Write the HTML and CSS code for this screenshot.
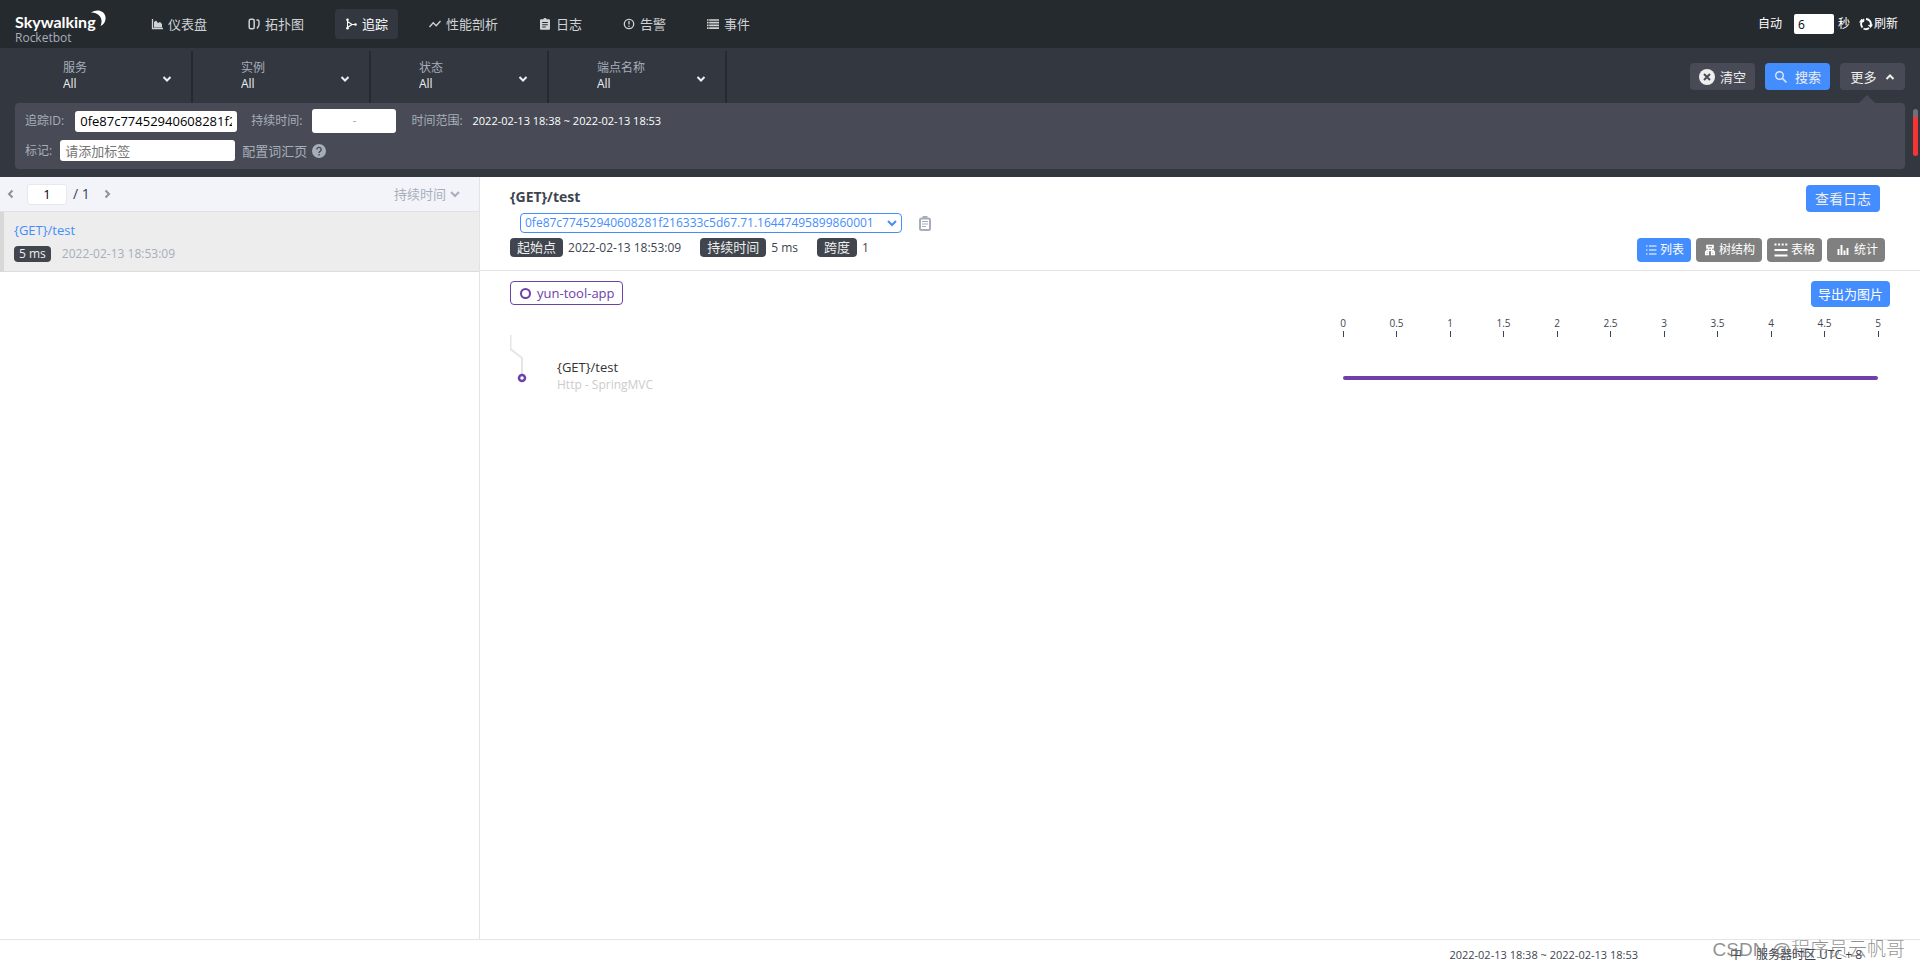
FILE: index.html
```html
<!DOCTYPE html>
<html lang="zh-CN">
<head>
<meta charset="utf-8">
<title>Skywalking Rocketbot</title>
<link rel="stylesheet" href="styles.css">
</head>
<body>
<header class="header">
  <div class="logo">
    <div class="logo-name">Skywalking<svg class="logo-moon" viewBox="0 0 16 17"><path d="M1 2.500C7-1.500 14.500.5 15.500 7c.5 4-1.500 7.500-5 9 1.500-3 1.500-6.500-.5-9.500C8 3.800 5 2.500 1 2.500z" fill="#fff"/></svg></div>
    <div class="logo-sub">Rocketbot</div>
  </div>
  <nav class="nav">
    <a class="nav-item" href="#"><svg class="icon" viewBox="0 0 12 12"><path d="M1.500 1v9.500H12" fill="none" stroke="currentColor" stroke-width="1.300"/><path d="M3 9.500V4l2-1.500L7 5l2-1 2 2v3.500z" fill="currentColor"/></svg>仪表盘</a>
    <a class="nav-item" href="#"><svg class="icon" viewBox="0 0 12 12"><rect x="1.200" y="1.200" width="5" height="9.600" rx="1.500" fill="none" stroke="currentColor" stroke-width="1.500"/><path d="M8.500 2h1q1.500 0 1.500 1.500v3q0 1.500-2 4" fill="none" stroke="currentColor" stroke-width="1.400"/></svg>拓扑图</a>
    <a class="nav-item active" href="#"><svg class="icon" viewBox="0 0 12 12"><path d="M2.500 2v8M2.500 3.500 7 6.500h3M2.500 9.500 7 6.500" fill="none" stroke="currentColor" stroke-width="1.100"/><circle cx="2.500" cy="1.700" r="1.300" fill="currentColor"/><circle cx="2.500" cy="10.300" r="1.300" fill="currentColor"/><circle cx="10.500" cy="6.500" r="1.300" fill="currentColor"/></svg>追踪</a>
    <a class="nav-item" href="#"><svg class="icon" viewBox="0 0 12 12"><path d="m.5 9 3.700-4.200 3 3L11.500 3" fill="none" stroke="currentColor" stroke-width="1.300"/></svg>性能剖析</a>
    <a class="nav-item" href="#"><svg class="icon" viewBox="0 0 12 12"><path fill-rule="evenodd" d="M1 2.200q0-1 1-1h2.300a1.800 1.800 0 0 1 3.400 0H10q1 0 1 1v8.600q0 1-1 1H2q-1 0-1-1zM3.200 4v1h5.600V4zm0 2.200v1h5.600v-1zm0 2.200v1h3.600v-1z" fill="currentColor"/></svg>日志</a>
    <a class="nav-item" href="#"><svg class="icon" viewBox="0 0 12 12"><circle cx="6" cy="6" r="4.700" fill="none" stroke="currentColor" stroke-width="1.300"/><path d="M6 3v3.600M6 7.700V9" stroke="currentColor" stroke-width="1.300"/></svg>告警</a>
    <a class="nav-item" href="#"><svg class="icon" viewBox="0 0 12 12"><path d="M0 2h1.600M2.200 2H12M0 4.700h1.600M2.200 4.700H12M0 7.400h1.600M2.200 7.400H12M0 10.100h1.600M2.200 10.100H12" stroke="currentColor" stroke-width="1.700"/></svg>事件</a>
  </nav>
  <div class="reload">
    <label for="auto">自动</label>
    <input id="auto" class="reload-input" type="text" value="6">
    <span class="reload-unit">秒</span>
    <button class="reload-btn" type="button"><svg class="icon-14" viewBox="0 0 14 14"><path d="M3.500 10.500A5 5 0 0 1 5.300 2.400M7 2a5 5 0 0 1 4.800 6M10 11a5 5 0 0 1-5.500.5" fill="none" stroke="#fff" stroke-width="1.900"/><path d="M0 5.500 2.500 1.800 5.500 5zM14 7.500 11.700 11 8.800 8z" fill="#fff"/></svg>刷新</button>
  </div>
</header>

<section class="tools">
  <div class="filters">
    <div class="filter"><label for="f1">服务</label><select id="f1"><option>All</option></select><svg class="chev" viewBox="0 0 10 10"><path d="m1.500 3 3.500 3.500L8.500 3" /></svg></div>
    <div class="filter"><label for="f2">实例</label><select id="f2"><option>All</option></select><svg class="chev" viewBox="0 0 10 10"><path d="m1.500 3 3.500 3.500L8.500 3" /></svg></div>
    <div class="filter"><label for="f3">状态</label><select id="f3"><option>All</option></select><svg class="chev" viewBox="0 0 10 10"><path d="m1.500 3 3.500 3.500L8.500 3" /></svg></div>
    <div class="filter"><label for="f4">端点名称</label><select id="f4"><option>All</option></select><svg class="chev" viewBox="0 0 10 10"><path d="m1.500 3 3.500 3.500L8.500 3" /></svg></div>
    <div class="actions">
      <button class="action" type="button"><svg class="icon-16" viewBox="0 0 16 16"><circle cx="8" cy="8" r="8" fill="#eee"/><path d="m5 5 6 6m0-6-6 6" stroke="#484b55" stroke-width="2"/></svg>清空</button>
      <button class="action primary" type="button"><svg class="icon-14" viewBox="0 0 14 14"><circle cx="5.500" cy="5.500" r="3.800" fill="none" stroke="#dfe9fb" stroke-width="1.400"/><path d="m8.300 8.300 4.200 4.200" stroke="#dfe9fb" stroke-width="1.600"/></svg>搜索</button>
      <button class="action more" type="button">更多<svg class="chev-up" viewBox="0 0 10 10"><path d="m1.500 7 3.500-3.500L8.500 7" /></svg></button>
    </div>
  </div>
  <div class="panel">
    <div class="panel-row">
      <label for="tid">追踪ID:</label>
      <input id="tid" class="field trace" type="text" value="0fe87c77452940608281f216333c5d67.71.16447495899860001">
      <label for="dmin">持续时间:</label>
      <span class="range"><input id="dmin" type="text"><span>-</span><input type="text" aria-label="最大持续时间"></span>
      <span class="muted">时间范围:</span>
      <span class="period">2022-02-13 18:38 ~ 2022-02-13 18:53</span>
    </div>
    <div class="panel-row">
      <label for="tag">标记:</label>
      <input id="tag" class="field tag-field" type="text" placeholder="请添加标签">
      <a class="vocab" href="#">配置词汇页<svg class="icon-14" viewBox="0 0 14 14"><circle cx="7" cy="7" r="7" fill="#a7aebb"/><path d="M4.800 5.500a2.200 2.100 0 1 1 3.300 1.800Q7 7.900 7 8.900M7 10v1.500" fill="none" stroke="#484b55" stroke-width="1.400"/></svg></a>
    </div>
  </div>
  <div class="scroll-mark"></div>
</section>

<main class="main">
  <aside class="list">
    <div class="pager">
      <button type="button" class="page-btn" aria-label="上一页"><svg class="arrow" viewBox="0 0 10 10"><path d="M6.500 1.500 3 5l3.500 3.500"/></svg></button>
      <input class="page-input" type="text" value="1" aria-label="页码">
      <span class="page-total">/ 1</span>
      <button type="button" class="page-btn" aria-label="下一页"><svg class="arrow" viewBox="0 0 10 10"><path d="M3.500 1.500 7 5 3.500 8.500"/></svg></button>
      <button type="button" class="sort">持续时间<svg class="arrow" viewBox="0 0 10 10"><path d="M1 3l4 4 4-4"/></svg></button>
    </div>
    <div class="trace-item">
      <a class="trace-name" href="#">{GET}/test</a>
      <div class="trace-meta"><span class="badge">5 ms</span><span>2022-02-13 18:53:09</span></div>
    </div>
  </aside>
  <section class="detail">
    <div class="detail-head">
      <div class="summary">
        <h1 class="title">{GET}/test</h1>
        <div class="id-row">
          <div class="id-box"><select class="id-select" aria-label="追踪ID"><option>0fe87c77452940608281f216333c5d67.71.16447495899860001</option></select><svg class="arrow blue" viewBox="0 0 10 10"><path d="M1 3l4 4 4-4"/></svg></div>
          <button class="copy" type="button" aria-label="复制"><svg viewBox="0 0 12 15"><rect x="1" y="2.500" width="10" height="11.500" rx="1.500" fill="none" stroke="#a7aebb" stroke-width="2"/><path d="M3.500 0h5v3h-5z" fill="#a7aebb"/><path d="M3 5.500h6M3 8h6M3 10.500h4" stroke="#a7aebb"/></svg></button>
        </div>
        <div class="facts">
          <div class="fact"><span class="tag">起始点</span>2022-02-13 18:53:09</div>
          <div class="fact"><span class="tag">持续时间</span>5 ms</div>
          <div class="fact"><span class="tag">跨度</span>1</div>
        </div>
      </div>
      <div class="head-actions">
        <button class="log-btn" type="button">查看日志</button>
        <div class="views">
          <button class="view current" type="button"><svg class="icon" viewBox="0 0 12 12"><path d="M1 2h1.500M4 2h7.500M1 6h1.500M4 6h7.500M1 10h1.500M4 10h7.500" stroke="#fff" stroke-width="1.200"/></svg>列表</button>
          <button class="view" type="button"><svg class="icon" viewBox="0 0 12 12"><path d="M3 1.500h6v2.500h-6zM1.800 8h2.400v2.500h-2.400zM7.800 8h2.400v2.500h-2.400z" fill="none" stroke="#fff" stroke-width="1.700"/><path d="M4.500 4v2.500M7.500 4v2.500M2.500 8V6.500h7V8" fill="none" stroke="#fff" stroke-width="1.300"/></svg>树结构</button>
          <button class="view table" type="button"><svg class="icon-14" viewBox="0 0 14 14"><path d="M.5 1.500h13" stroke="#fff" stroke-width="2" stroke-dasharray="2 1.600"/><path d="M.5 7h13M.5 12.500h13" stroke="#fff" stroke-width="2"/></svg>表格</button>
          <button class="view stats" type="button"><svg class="icon" viewBox="0 0 12 12"><path d="M1.500 5v6M4.500 1v10M7.500 6.500V11M10.500 4v7" stroke="#fff" stroke-width="1.900"/></svg>统计</button>
        </div>
      </div>
    </div>
    <div class="chart">
      <div class="chart-top">
        <span class="service"><span class="ring"></span>yun-tool-app</span>
        <button class="export" type="button">导出为图片</button>
      </div>
      <div class="gantt">
        <div class="span-row">
          <svg class="branch" viewBox="0 0 20 50"><path d="M.5 0v14L12 23v16" fill="none" stroke="#e5e5e5" stroke-width="2"/><circle cx="12" cy="43" r="3" fill="#fff" stroke="#6e40aa" stroke-width="2.500"/></svg>
          <div class="span-text"><div class="span-name">{GET}/test</div><div class="span-kind">Http - SpringMVC</div></div>
        </div>
        <div class="timeline">
          <div class="axis"><span>0</span><span>0.5</span><span>1</span><span>1.5</span><span>2</span><span>2.5</span><span>3</span><span>3.5</span><span>4</span><span>4.5</span><span>5</span></div>
          <div class="bar"></div>
        </div>
      </div>
    </div>
  </section>
</main>
<footer class="footer">
  <span class="foot-time">2022-02-13 18:38 ~ 2022-02-13 18:53</span>
  <span class="foot-lang">中</span>
  <span class="foot-zone">服务器时区 UTC + 8</span>
  <span class="watermark">CSDN @程序员云帆哥</span>
</footer>
</body>
</html>
```

FILE: styles.css
```css
* { box-sizing: border-box; }
body {
  margin: 0;
  min-height: 100vh;
  display: flex;
  flex-direction: column;
  font: 12px/16px "Open Sans", "Noto Sans CJK SC", sans-serif;
  color: #3d444f;
  background: #fff;
}
a { text-decoration: none; color: inherit; }
button, input, select { font: inherit; color: inherit; border: 0; margin: 0; padding: 0; background: none; }
button { display: flex; align-items: center; }
select { appearance: none; }
svg { flex: none; display: block; }
.icon { width: 12px; height: 12px; }
.icon-14 { width: 14px; height: 14px; }
.icon-16 { width: 16px; height: 16px; }

.header { display: flex; align-items: center; height: 48px; padding: 0 22px 0 15px; background: #252a2f; color: #fff; }
.logo { width: 126px; padding-top: 7px; }
.logo-name { display: flex; align-items: flex-start; height: 20px; font: 700 16px/24px Lato, sans-serif; }
.logo-moon { width: 16px; height: 17px; margin-left: -6px; }
.logo-sub { font-size: 12px; line-height: 15px; color: #a7aebb; }
.nav { display: flex; gap: 21px; }
.nav-item { display: flex; align-items: center; gap: 5px; height: 30px; padding: 0 10px; border-radius: 4px; font-size: 13px; color: #d0d2d4; }
.nav-item.active { background: #333840; color: #fff; }
.reload { display: flex; align-items: center; margin-left: auto; }
.reload-input { width: 40px; height: 20px; margin: 0 4px 0 12px; padding: 0 4px; border-radius: 2px; background: #fff; color: #000; }
.reload-btn { gap: 1px; margin-left: 9px; }

.tools { position: relative; padding: 3px 15px 8px; background: #333840; }
.filters { display: flex; height: 52px; }
.filter { position: relative; display: flex; flex-direction: column; width: 178px; padding: 9px 20px 0 48px; border-right: 2px solid #252a2f; color: #a7aebb; }
.filter select { height: 16px; color: #eee; text-align: left; }
.chev, .chev-up { width: 10px; height: 10px; fill: none; stroke: #eee; stroke-width: 2; }
.filter .chev { position: absolute; right: 19px; top: 23px; }
.actions { display: flex; gap: 10px; margin-left: auto; padding-top: 12px; }
.action { position: relative; justify-content: center; gap: 5px; width: 65px; height: 27px; border-radius: 4px; background: #484b55; color: #eee; font-size: 13px; }
.action.primary { background: #448dfe; gap: 7px; }
.action.more { gap: 8px; }
.action.more::after { content: ""; position: absolute; left: 19px; top: 32px; border: 8px solid transparent; border-top: 0; border-bottom-color: #484b55; }
.panel { padding: 6px 10px 8px; border-radius: 4px; background: #484b55; color: #a7aebb; }
.panel-row { display: flex; align-items: center; height: 24px; }
.panel-row + .panel-row { height: 21px; margin-top: 7px; }
.field { height: 21px; padding: 0 5px; border-radius: 3px; background: #fff; color: #000; font-size: 13px; }
.trace { width: 162px; margin: 0 14px 0 11px; }
.range { display: flex; align-items: center; width: 84px; height: 24px; margin: 0 15px 0 10px; border-radius: 3px; background: #fff; }
.range input { flex: 1; width: 0; height: 20px; }
.period { margin-left: 10px; color: #fff; font-size: 11px; }
.tag-field { width: 175px; margin: 0 7px 0 8px; }
.tag-field::placeholder { color: #757575; }
.vocab { display: flex; align-items: center; gap: 5px; font-size: 13px; }
.scroll-mark { position: absolute; right: 2px; top: 61px; width: 5px; height: 47px; border-radius: 3px; background: linear-gradient(#6d7178 8px, #f73434 8px); }

.main { flex: 1; display: flex; }
.list { flex: 0 0 25%; border-right: 1px solid #e2e3e6; }
.pager { display: flex; align-items: center; height: 35px; padding: 0 19px 0 6px; border-bottom: 1px solid #e0e2e8; background: #f3f4f9; font-size: 13px; }
.arrow { width: 10px; height: 10px; fill: none; stroke: #8c919c; stroke-width: 2; }
.arrow.blue { stroke: #448dfe; }
.page-input { width: 40px; height: 21px; margin: 0 6px 0 11px; border: 1px solid #e6e8ee; border-radius: 3px; background: #fff; color: #000; text-align: center; }
.page-total { margin-right: 12px; font-size: 14px; }
.sort { gap: 4px; margin-left: auto; color: #a7aebb; }
.sort .arrow { stroke: #a7aebb; }
.trace-item { height: 60px; padding: 9px 10px 0; border-left: 4px solid #d8d8d8; border-bottom: 1px solid #dcdcdc; background: #ededed; }
.trace-name { display: block; font-size: 13px; line-height: 18px; color: #448dfe; }
.trace-meta { display: flex; align-items: center; gap: 11px; margin-top: 7px; color: #a7aebb; }
.badge { padding: 0 5px; border-radius: 4px; background: #40454e; color: #eee; }

.detail { flex: 1; min-width: 0; }
.detail-head { display: flex; justify-content: space-between; height: 94px; padding: 8px 35px 8px 30px; border-bottom: 1px solid #e2e3e6; }
.title { margin: 0; font-size: 14px; line-height: 24px; font-weight: 700; }
.id-row { display: flex; align-items: center; gap: 17px; margin: 4px 0 5px 10px; }
.id-box { display: flex; align-items: center; justify-content: space-between; min-width: 382px; height: 20px; padding: 0 4px; border: 1px solid #448dfe; border-radius: 4px; color: #448dfe; }
.id-select { height: 18px; }
.copy svg { width: 12px; height: 15px; }
.facts { display: flex; gap: 19px; }
.fact { display: flex; align-items: center; gap: 5px; }
.tag { padding: 0 7px; border-radius: 4px; background: #40454e; color: #eee; font-size: 13px; line-height: 19px; }
.head-actions { display: flex; flex-direction: column; align-items: flex-end; justify-content: space-between; }
.log-btn { height: 27px; margin-right: 5px; padding: 0 9px; border-radius: 4px; background: #448dfe; color: #eee; font-size: 14px; }
.views { display: flex; gap: 5px; }
.view { gap: 3px; height: 24px; padding: 0 7px; border-radius: 4px; background: #808080; color: #fff; }
.view:not(.table) { padding-left: 8px; }
.view.current { background: #448dfe; }
.view.stats { gap: 5px; padding-left: 10px; }
.chart { padding: 10px 30px 0; }
.chart-top { display: flex; justify-content: space-between; align-items: flex-start; }
.service { display: flex; align-items: center; gap: 6px; height: 24px; padding: 0 7px 0 9px; border: 1px solid #6e40aa; border-radius: 4px; color: #6e40aa; font-size: 13px; }
.ring { width: 11px; height: 11px; border: 2px solid #6e40aa; border-radius: 50%; }
.export { height: 26px; padding: 0 7px; border-radius: 4px; background: #448dfe; color: #fff; font-size: 13px; }
.gantt { display: grid; grid-template-columns: 833fr 535fr; padding: 9px 12px 0 0; }
.span-row { display: flex; gap: 27px; padding-top: 19px; }
.branch { width: 20px; height: 50px; }
.span-text { padding-top: 23px; }
.span-name { font-size: 13px; line-height: 18px; color: #333; }
.span-kind { font-size: 12px; line-height: 18px; color: #ccc; }
.axis { display: flex; justify-content: space-between; font-size: 10px; line-height: 15px; }
.axis span { display: flex; flex-direction: column; align-items: center; width: 0; white-space: nowrap; }
.axis span::after { content: ""; width: 1px; height: 6px; background: #3d444f; }
.bar { height: 4px; margin-top: 39px; border-radius: 2px; background: #6e40aa; }

.footer { position: relative; display: flex; align-items: center; height: 30px; padding: 0 58px 0 0; border-top: 1px solid #e5e5e5; }
.foot-time { margin-left: auto; font-size: 11px; }
.foot-lang { margin: 0 14px 0 92px; }
.watermark { position: absolute; right: 15px; bottom: 7px; font-size: 19px; line-height: 24px; color: rgba(110, 110, 110, 0.75); font-family: "Liberation Sans", "Noto Sans CJK SC", sans-serif; font-weight: 300; }
```
